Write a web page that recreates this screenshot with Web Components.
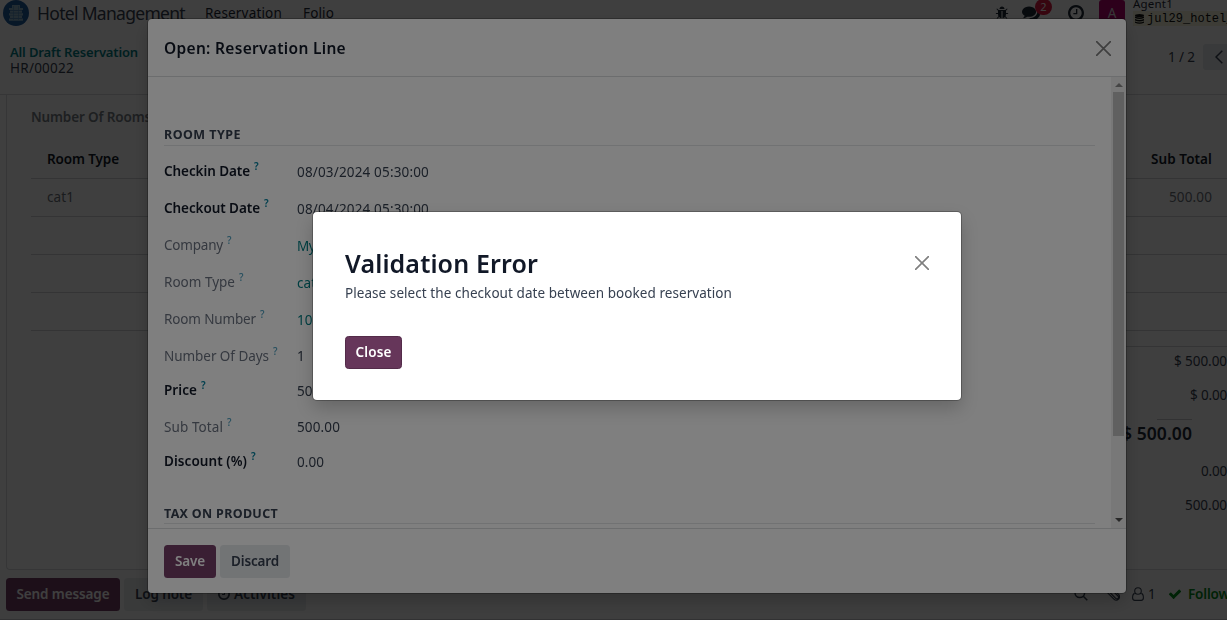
<!DOCTYPE html>
<html lang="en">
<head>
<meta charset="utf-8">
<title>Hotel Management</title>
<style>
html,body{margin:0;height:100%;overflow:hidden;background:#fff}
body{font-family:"Noto Sans","Open Sans",sans-serif;font-size:13.5px;line-height:20px;color:#374151}
</style>
</head>
<body>
<hotel-app></hotel-app>
<script>
function define(name, html, ready) {
  const t = document.createElement('template');
  t.innerHTML = html;
  customElements.define(name, class extends HTMLElement {
    connectedCallback() {
      if (this.shadowRoot) return;
      this.attachShadow({mode: 'open'}).appendChild(t.content.cloneNode(true));
      if (ready) ready.call(this, this.shadowRoot);
    }
  });
}

/* Single-line text whose tracking is adjusted to fill the width in "w". */
define('ui-text', `<style>:host{display:inline-block;white-space:nowrap;flex:none}span{display:inline-block}</style><span><slot></slot></span>`, function (root) {
  const w = +this.getAttribute('w'), s = root.querySelector('span');
  if (!w) return;
  this.style.width = w + 'px';
  const n = this.textContent.length;
  s.style.letterSpacing = (w - s.getBoundingClientRect().width) / n + 'px';
});

const ICONS = {
  bug: ['0 0 1792 1792', '<path d="M1696 960q0 26-19 45t-45 19h-224q0 171-67 290l208 209q19 19 19 45t-19 45q-18 19-45 19t-45-19l-198-197q-5 5-15 13t-42 28.5-65 36.5-82 29-97 13v-896h-128v896q-51 0-101.5-13.5t-87-33-66-39-43.5-32.5l-15-14-183 207q-20 21-48 21-24 0-43-16-19-18-20.5-44.5t15.5-46.5l202-227q-58-114-58-274h-224q-26 0-45-19t-19-45 19-45 45-19h224v-294l-173-173q-19-19-19-45t19-45 45-19 45 19l173 173h844l173-173q19-19 45-19t45 19 19 45-19 45l-173 173v294h224q26 0 45 19t19 45zm-480-576h-640q0-133 93.5-226.5t226.5-93.5 226.5 93.5 93.5 226.5z"/>'],
  comments: ['0 0 1792 1792', '<path d="M1408 768q0 139-94 257t-256.5 186.5-353.5 68.5q-86 0-176-16-124 88-278 128-36 9-86 16h-3q-11 0-20.5-8t-11.5-21q-1-3-1-6.5t.5-6.5 2-6l2.5-5 3.5-5.5 4-5 4.5-5 4-4.5q5-6 23-25t26-29.5 22.5-29 25-38.5 20.5-44q-124-72-195-177t-71-224q0-139 94-257t256.5-186.5 353.5-68.5 353.5 68.5 256.5 186.5 94 257zm384 256q0 120-71 224.5t-195 176.5q10 24 20.5 44t25 38.5 22.5 29 26 29.5 23 25q1 1 4 4.5t4.5 5 4 5 3.5 5.5l2.5 5 2 6 .5 6.5-1 6.5q-3 14-13 22t-22 7q-50-7-86-16-154-40-278-128-90 16-176 16-271 0-472-132 58 4 88 4 161 0 309-45t264-129q125-92 192-212t67-254q0-77-23-152 129 71 204 178t75 230z"/>'],
  clock: ['128 128 1536 1536', '<path d="M1024 544v448q0 14-9 23t-23 9h-320q-14 0-23-9t-9-23v-64q0-14 9-23t23-9h224v-352q0-14 9-23t23-9h64q14 0 23 9t9 23zm416 352q0-148-73-273t-198-198-273-73-273 73-198 198-73 273 73 273 198 198 273 73 273-73 198-198 73-273zm224 0q0 209-103 385.5t-279.5 279.5-385.5 103-385.5-103-279.5-279.5-103-385.5 103-385.5 279.5-279.5 385.5-103 385.5 103 279.5 279.5 103 385.5z"/>'],
  check: ['0 0 1792 1792', '<path d="M1671 566q0 40-28 68l-724 724-136 136q-28 28-68 28t-68-28l-136-136-362-362q-28-28-28-68t28-68l136-136q28-28 68-28t68 28l294 295 656-657q28-28 68-28t68 28l136 136q28 28 28 68z"/>'],
  close: ['0 0 14 14', '<path d="M.6 .6 13.4 13.4M13.4 .6 .6 13.4" stroke="currentColor" stroke-width="1.6" stroke-linecap="round"/>'],
  db: ['0 0 9 10', '<ellipse cx="4.5" cy="1.5" rx="4.5" ry="1.5"/><path d="M0 2.400q4.500 2 9 0v1.700q-4.500 2-9 0zM0 4.900q4.500 2 9 0v1.700q-4.500 2-9 0zM0 7.400q4.500 2 9 0v1.300q-4.500 2.300-9 0z"/>'],
  left: ['0 0 8 14', '<path d="M7.300 .7 1 7l6.300 6.300" fill="none" stroke="currentColor" stroke-width="1.500"/>'],
  search: ['0 0 14 14', '<g fill="none" stroke="currentColor" stroke-width="1.500"><circle cx="5.800" cy="5.800" r="4.800"/><path d="M9.300 9.300 13.300 13.300"/></g>'],
  clip: ['0 0 14 14', '<path d="M3 4.500 9.700 11.300a1.600 1.600 0 0 0 2.300-2.300L5 2a2.500 2.500 0 0 0-3.600 3.600l6.500 6.500a3.300 3.300 0 0 0 4.700-4.700L7.500 2.300" fill="none" stroke="currentColor" stroke-width="1.100"/>'],
  user: ['0 0 12 14', '<g fill="none" stroke="currentColor" stroke-width="1.100"><circle cx="6" cy="4" r="3.300"/><path d="M2.700 6.400C1.200 6.800.6 8.500.6 10.800c0 1.600 1 2.600 2.200 2.600h6.400c1.200 0 2.200-1 2.200-2.600 0-2.300-.6-4-2.100-4.400"/></g>'],
  logo: ['0 0 26 26', '<circle cx="13" cy="13" r="13" fill="#1f5c9f"/><g fill="#8fb2c6"><path d="M9 5h8v3H9zM6 8h14v2H6zM7 10.500h12v2.300H7zM6 13.200h14v2.200H6zM7 15.800h12v2.300H7zM6 18.500h14v2.300H6z"/></g><path d="M10.500 6v14M15.500 6v14" stroke="#4b86b8" stroke-width=".6"/>']
};
define('ui-icon', `<style>:host{display:inline-flex;flex:none}svg{display:block}</style><svg fill="currentColor"></svg>`, function (root) {
  const [box, shape] = ICONS[this.getAttribute('name')], s = root.querySelector('svg');
  s.setAttribute('viewBox', box);
  s.setAttribute('width', this.getAttribute('w'));
  s.setAttribute('height', this.getAttribute('h') || this.getAttribute('w'));
  s.innerHTML = shape;
});

define('ui-button', `<style>
:host{display:flex;align-items:center;justify-content:center;gap:4px;box-sizing:border-box;height:33px;border-radius:3.500px;background:#e5e8eb;color:#374151;font-weight:600;flex:none;border:1px solid transparent}
:host([primary]){background:#743e66;color:#fff}
:host([pressed]){background:#66365a;border-color:#532b49}
:host([raised]){padding-bottom:2px}
</style><slot></slot>`);

define('nav-bar', `<style>
:host{display:flex;align-items:center;height:26px;box-sizing:border-box;overflow:hidden;color:#374151}
.brand{font-size:17.500px;margin-left:8px}
ui-icon[name=logo]{margin-left:3px}
.msg{position:relative;margin-left:13px;display:flex}
.badge{position:absolute;left:13px;top:-5px;width:17px;height:16px;border-radius:9px;background:#dc1840;color:#fff;font-size:11px;line-height:16px;text-align:center}
.tools{margin-left:auto;display:flex;align-items:center;color:#1f2937;flex:none}
.avatar{width:26px;height:26px;background:#b4006c;color:#ddd;border-radius:3px;text-align:center;line-height:26px;margin-left:15px}
.who{width:94px;margin-left:8px;font-size:11.500px;line-height:12px;align-self:flex-start;height:26px;margin-top:-2px}
.db{display:flex;align-items:center;gap:3px;background:#f4f3da;height:16px;padding-left:2px;font-family:"Liberation Mono",monospace;font-size:12px;color:#111;margin-top:1px}
</style>
<ui-icon name="logo" w="26"></ui-icon>
<ui-text class="brand" w="148">Hotel Management</ui-text>
<ui-text w="77" style="margin-left:20px;color:#1f2937">Reservation</ui-text>
<ui-text w="31" style="margin-left:21px;color:#1f2937">Folio</ui-text>
<div class="tools"><ui-icon name="bug" w="14"></ui-icon>
<div class="msg"><ui-icon name="comments" w="18"></ui-icon><span class="badge">2</span></div>
<ui-icon name="clock" w="16" style="margin-left:28px"></ui-icon><div class="avatar">A</div>
<div class="who"><ui-text w="40">Agent1</ui-text><div class="db"><ui-icon name="db" w="9" h="10"></ui-icon><ui-text w="86.500">jul29_hotel_</ui-text></div></div></div>`);

define('control-panel', `<style>
:host{display:flex;justify-content:space-between;box-sizing:border-box;height:69px;border-bottom:1px solid #d8dadd;padding:18px 0 0 10px}
.crumbs{display:flex;flex-direction:column;line-height:16px}
.link{color:#017e84;font-weight:600;font-size:13px}
.pager{display:flex;align-items:center;height:26px}
.prev{width:24px;height:26px;background:#e5e8ed;margin-left:8px;display:flex;align-items:center;padding-left:12px;box-sizing:border-box;border-radius:3px 0 0 3px}
</style>
<div class="crumbs"><ui-text class="link" w="128">All Draft Reservation</ui-text><ui-text w="64">HR/00022</ui-text></div>
<div class="pager"><ui-text w="27">1 / 2</ui-text><div class="prev"><ui-icon name="left" w="8" h="14"></ui-icon></div></div>`);

define('form-sheet', `<style>
:host{display:block;box-sizing:border-box;height:475px;margin-left:6px;border:1px solid #d8dadd;border-width:0 0 1px 1px;border-radius:0 0 0 4px;padding-left:24px}
.tab{height:45px;line-height:45px;font-weight:600;color:#777c84}
.row{display:flex;justify-content:space-between;align-items:center;box-sizing:border-box;height:38px;border-bottom:1px solid #d0d2d5;padding:0 15px 2px 16px;color:#6b7078}
.head{font-weight:600;color:#111827;height:39px;padding-bottom:0}
.rule{height:15px;margin-left:800px;border-bottom:1px solid #d0d2d5}
.total{display:flex;justify-content:flex-end;align-items:center}
.sum{display:flex;justify-content:flex-end;padding-right:35px}
.sum i{width:35px;height:1px;background:#c8cace}
</style>
<div class="tab"><ui-text w="120">Number Of Rooms</ui-text></div>
<div class="row head"><ui-text w="72">Room Type</ui-text><ui-text w="61">Sub Total</ui-text></div>
<div class="row"><ui-text w="27">cat1</ui-text><ui-text w="43">500.00</ui-text></div>
<div class="row"></div><div class="row"></div><div class="row"></div>
<div class="rule"></div>
<div class="total" style="height:27px;padding-bottom:2px"><ui-text w="53">$ 500.00</ui-text></div>
<div class="total" style="height:38px"><ui-text w="37">$ 0.00</ui-text></div>
<div class="sum" style="padding-top:5px"><i></i></div>
<div class="sum" style="height:33px;line-height:27px;font-size:17.500px;font-weight:600;color:#1f2937"><ui-text w="70">$ 500.00</ui-text></div>
<div class="total" style="height:35px"><ui-text w="26">0.00</ui-text></div>
<div class="total" style="height:33px"><ui-text w="42">500.00</ui-text></div>`);

define('chatter-bar', `<style>
:host{display:flex;align-items:center;gap:4px;height:49px;padding-left:6px;background:#fafbfb;border-bottom:1px solid #c9c9cc}
.r{margin-left:auto;display:flex;align-items:center;padding-bottom:2px}
.f{color:#008818;font-weight:600;width:39px;overflow:hidden;margin-left:6px;display:flex}
</style>
<ui-button primary raised style="width:114px"><ui-text w="93">Send message</ui-text></ui-button>
<ui-button raised style="width:79px"><ui-text w="57">Log note</ui-text></ui-button>
<ui-button raised style="width:99px"><ui-icon name="clock" w="12"></ui-icon><ui-text w="61">Activities</ui-text></ui-button>
<div class="r"><ui-icon name="search" w="14"></ui-icon><ui-icon name="clip" w="14" style="margin-left:18px"></ui-icon><ui-icon name="user" w="12" h="14" style="margin-left:12px"></ui-icon><ui-text style="margin-left:4px" w="7">1</ui-text><ui-icon name="check" w="14" style="margin-left:13px;color:#008818"></ui-icon><div class="f"><ui-text w="62">Following</ui-text></div></div>`);

define('modal-layer', `<style>
:host{position:fixed;inset:0;background:rgba(0,0,0,.5);box-sizing:border-box}
.card{background:#fff;border-radius:4px;box-sizing:border-box;box-shadow:0 0 0 1px rgba(0,0,0,.25),0 8px 18px rgba(0,0,0,.2);height:100%;display:flex;flex-direction:column;overflow:hidden}
</style><div class="card"><slot></slot></div>`);

define('field-row', `<style>
:host{display:flex;align-items:center}
.l{width:133px;display:flex;color:#6b7280}
.h{font-size:10px;line-height:10px;font-weight:500;color:#4c9dbd;margin:0 0 0 4px}
.v{color:#374151;padding-top:1px}
:host([low]) .v{padding-top:3px}
:host([high]) .l{padding-bottom:2px}
:host([strong]) .l{color:#111827;font-weight:600}
:host([strong]) .h{color:#017e9c;font-weight:600}
:host([link]) .v{color:#017e84}
</style><div class="l"><ui-text></ui-text><span class="h">?</span></div><div class="v"><slot></slot></div>`);

define('section-title', `<style>:host{display:block;border-bottom:1px solid #e2e4e7;height:22px;line-height:24px;font-size:12.500px;font-weight:700;color:#374151}</style><slot></slot>`);

define('scroll-bar', `<style>
:host{display:flex;flex-direction:column;align-items:center;width:15px;background:#f1f1f1;flex:none}
i{width:0;height:0;border:4px solid transparent;border-width:0 4px 4px;border-bottom-color:#8a8a8a;margin:6px 0 5px}
b{width:11px;height:344px;background:#c1c1c1}
u{width:0;height:0;border:4px solid transparent;border-width:4px 4px 0;border-top-color:#505050;margin:auto 0 6px}
</style><i></i><b></b><u></u>`);

define('reservation-dialog', `<style>
:host{display:flex;flex-direction:column;height:100%}
header{display:flex;align-items:center;justify-content:space-between;height:57px;border-bottom:1px solid #d8dadd;padding:0 15px 0 16px;color:#111827;font-weight:600;font-size:15.500px;flex:none}
header ui-icon{color:#7f7f7f;padding-top:1px}
.mid{display:flex;height:451px;overflow:hidden;flex:none}
.form{flex:1;padding:46px 16px 0}
.fields{padding:6px 0 24px}
footer{display:flex;align-items:center;gap:4px;flex:1;border-top:1px solid #d8dadd;padding-left:16px}
</style>
<header><ui-text w="182">Open: Reservation Line</ui-text><ui-icon name="close" w="15"></ui-icon></header>
<div class="mid"><div class="form"><section-title><ui-text w="77">ROOM TYPE</ui-text></section-title><div class="fields"></div>
<section-title style="line-height:26px"><ui-text w="114">TAX ON PRODUCT</ui-text></section-title></div><scroll-bar></scroll-bar></div>
<footer><ui-button primary style="width:52px"><ui-text w="30">Save</ui-text></ui-button><ui-button style="width:70px"><ui-text w="48">Discard</ui-text></ui-button></footer>`, function (root) {
  const rows = [
    ['Checkin Date', 86, '08/03/2024 05:30:00', 132, 37, 'strong low'],
    ['Checkout Date', 96, '08/04/2024 05:30:00', 132, 37, 'strong low'],
    ['Company', 59, 'My Company', 77, 37, 'link low'],
    ['Room Type', 71, 'cat1', 27, 37, 'link low'],
    ['Room Number', 92, '101', 23, 37, 'link low'],
    ['Number Of Days', 105, '1', 7, 37, ''],
    ['Price', 33, '500.00', 43, 33, 'strong high'],
    ['Sub Total', 59, '500.00', 43, 39, ''],
    ['Discount (%)', 83, '0.00', 27, 31, 'strong high']
  ];
  const box = root.querySelector('.fields');
  for (const [label, lw, value, vw, h, kinds] of rows) {
    const row = document.createElement('field-row');
    for (const kind of kinds.split(' ')) if (kind) row.setAttribute(kind, '');
    row.style.height = h + 'px';
    row.innerHTML = '<ui-text w="' + vw + '">' + value + '</ui-text>';
    box.appendChild(row);
    const l = document.createElement('ui-text');
    l.setAttribute('w', lw);
    l.textContent = label;
    row.shadowRoot.querySelector('.l ui-text').replaceWith(l);
  }
});

define('error-dialog', `<style>
:host{display:flex;flex-direction:column;height:100%;box-sizing:border-box;padding:34px 32px 0}
.t{display:flex;justify-content:space-between;align-items:center;height:34px;font-size:25px;line-height:34px;color:#111827;font-weight:600}
ui-icon{color:#7f7f7f}
.m{height:24px;line-height:24px;margin:1px 0 31px}
</style>
<div class="t"><ui-text w="193">Validation Error</ui-text><ui-icon name="close" w="14"></ui-icon></div>
<div class="m"><ui-text w="387">Please select the checkout date between booked reservation</ui-text></div>
<ui-button primary pressed raised style="width:57px"><ui-text w="36">Close</ui-text></ui-button>`);

define('hotel-app', `<style>:host{display:flex;flex-direction:column;height:620px;overflow:hidden}nav-bar,control-panel,form-sheet{flex:none}</style>
<nav-bar></nav-bar><control-panel></control-panel><form-sheet></form-sheet><chatter-bar></chatter-bar>
<modal-layer style="padding:19px 101px 27px 148px"><reservation-dialog></reservation-dialog></modal-layer>
<modal-layer style="padding:212px 266px 220px 313px"><error-dialog></error-dialog></modal-layer>`);
</script>
</body>
</html>
